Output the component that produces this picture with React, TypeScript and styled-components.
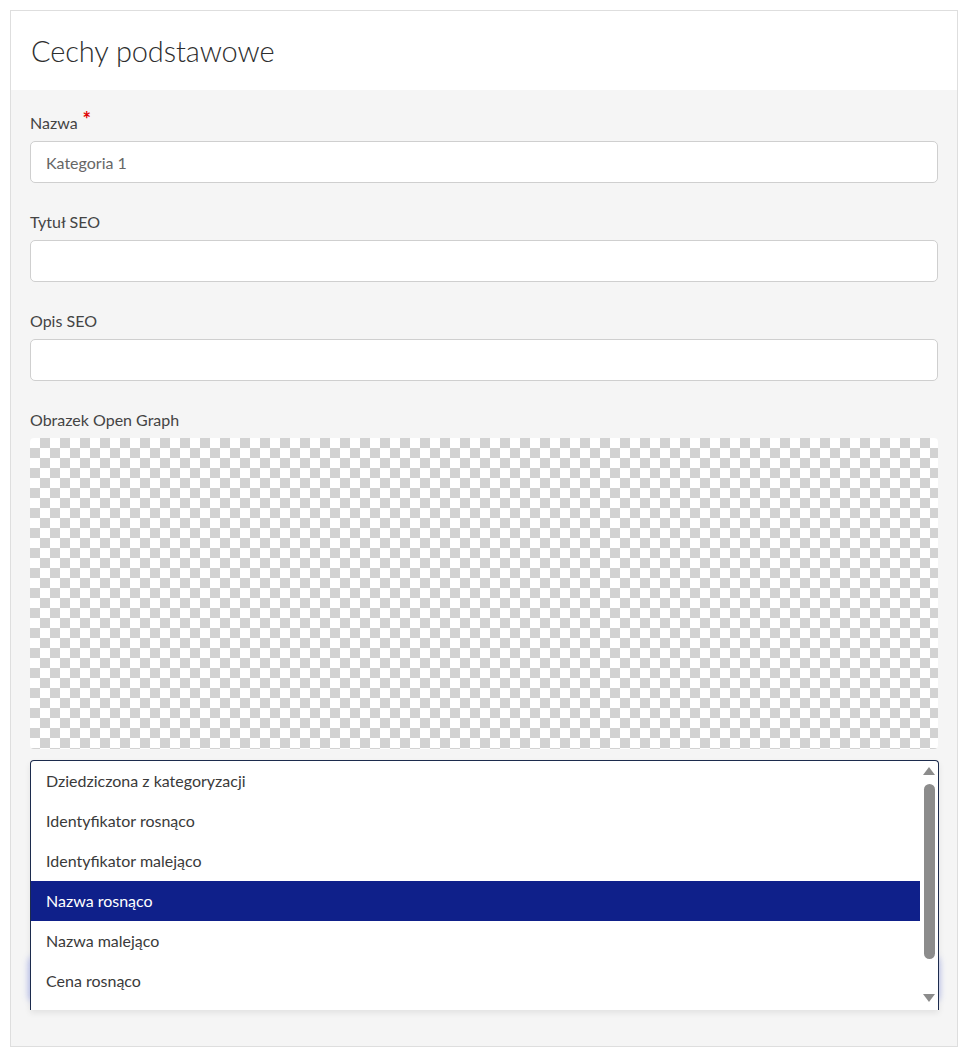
import React from "react";
import styled, { createGlobalStyle } from "styled-components";

const sortOptions = [
  "Dziedziczona z kategoryzacji",
  "Identyfikator rosnąco",
  "Identyfikator malejąco",
  "Nazwa rosnąco",
  "Nazwa malejąco",
  "Cena rosnąco",
];

const selectedOption = "Nazwa rosnąco";

const GlobalStyle = createGlobalStyle`
  html, body {
    margin: 0;
    padding: 0;
    background-color: #fff;
    font-family: "Lato", "Noto Sans", sans-serif;
    color: #333;
  }
`;

const Page = styled.div`
  padding: 10px 11px 12px 10px;
`;

const Card = styled.section`
  border: 1px solid #dedede;
  background-color: #f5f5f5;
`;

const CardHeader = styled.header`
  height: 79px;
  display: flex;
  align-items: center;
  padding: 0 20px;
  background-color: #fff;

  h2 {
    margin: 0;
    font-size: 29px;
    font-weight: 300;
    color: #2e2e2e;
    letter-spacing: -0.1px;
  }
`;

const CardBody = styled.div`
  padding: 22px 19px 46px;
`;

const Field = styled.div<{ $last?: boolean }>`
  position: relative;
  margin-bottom: ${(p) => (p.$last ? "0" : "28px")};
`;

const Label = styled.label`
  display: block;
  height: 22px;
  line-height: 22px;
  margin-bottom: 7px;
  font-size: 16px;
  color: #444;

  sup {
    color: #e00000;
    font-size: 20px;
    font-weight: 700;
    line-height: 0;
    margin-left: 5px;
    vertical-align: 2px;
  }
`;

const Input = styled.input`
  display: block;
  box-sizing: border-box;
  width: 100%;
  height: 42px;
  padding: 0 15px;
  border: 1px solid #cfcfcf;
  border-radius: 5px;
  background-color: #fff;
  font-family: inherit;
  font-size: 16px;
  color: #666;
  outline: none;
`;

const TextArea = styled.textarea`
  display: block;
  box-sizing: border-box;
  width: 100%;
  height: 153px;
  padding: 10px 15px;
  border: 1px solid #cfcfcf;
  border-radius: 5px;
  background-color: #fff;
  font-family: inherit;
  font-size: 16px;
  resize: none;
`;

const ImagePreview = styled.div`
  height: 311px;
  border-radius: 4px;
  background-color: #fff;
  background-image: conic-gradient(
    #d2d2d2 0 25%,
    #fff 0 50%,
    #d2d2d2 0 75%,
    #fff 0
  );
  background-size: 20px 20px;
`;

const Select = styled.select`
  display: block;
  box-sizing: border-box;
  width: 100%;
  height: 42px;
  padding: 0 15px;
  border: 1px solid #2a3fb0;
  border-radius: 5px;
  background-color: #fff;
  font-family: inherit;
  font-size: 16px;
  color: #333;
  box-shadow: 0 0 6px 2px rgba(90, 110, 230, 0.35);
  appearance: none;
`;

const ListBox = styled.div`
  position: absolute;
  left: 0;
  right: -1px;
  bottom: -10px;
  height: 250px;
  display: flex;
  box-sizing: border-box;
  border: 1px solid #1c2b4d;
  border-bottom: none;
  border-radius: 4px 4px 0 0;
  background-color: #fff;
  box-shadow: 0 3px 6px rgba(0, 0, 0, 0.08);
`;

const OptionList = styled.ul`
  flex: 1;
  list-style: none;
  margin: 0;
  padding: 0;
`;

const Option = styled.li<{ $selected?: boolean }>`
  height: 40px;
  line-height: 40px;
  padding: 0 15px;
  font-size: 16px;
  color: ${(p) => (p.$selected ? "#fff" : "#3a3a3a")};
  background-color: ${(p) => (p.$selected ? "#0f208a" : "transparent")};
`;

const ScrollBar = styled.div`
  width: 18px;
  display: flex;
  flex-direction: column;
  align-items: center;
  padding: 5px 0 7px;
  box-sizing: border-box;

  .thumb {
    flex: 1;
    width: 11px;
    margin: 8px 0 34px;
    border-radius: 6px;
    background-color: #8c8c8c;
  }
`;

const Arrow = ({ up }: { up?: boolean }) => (
  <svg width="14" height="10" viewBox="0 0 14 10">
    <polygon points={up ? "7,1 13,9 1,9" : "1,1 13,1 7,9"} fill="#8c8c8c" />
  </svg>
);

const App = () => {
  return (
    <Page>
      <GlobalStyle />
      <Card>
        <CardHeader>
          <h2>Cechy podstawowe</h2>
        </CardHeader>
        <CardBody>
          <Field>
            <Label>
              Nazwa<sup>*</sup>
            </Label>
            <Input defaultValue="Kategoria 1" />
          </Field>
          <Field>
            <Label>Tytuł SEO</Label>
            <Input />
          </Field>
          <Field>
            <Label>Opis SEO</Label>
            <Input />
          </Field>
          <Field>
            <Label>Obrazek Open Graph</Label>
            <ImagePreview />
          </Field>
          <Field>
            <TextArea aria-label="Opis kategorii" />
          </Field>
          <Field $last>
            <Select aria-label="Sortowanie produktów" defaultValue="">
              <option value="" />
            </Select>
            <ListBox role="listbox">
              <OptionList>
                {sortOptions.map((o) => (
                  <Option key={o} $selected={o === selectedOption}>
                    {o}
                  </Option>
                ))}
              </OptionList>
              <ScrollBar>
                <Arrow up />
                <div className="thumb" />
                <Arrow />
              </ScrollBar>
            </ListBox>
          </Field>
        </CardBody>
      </Card>
    </Page>
  );
};

export default App;
